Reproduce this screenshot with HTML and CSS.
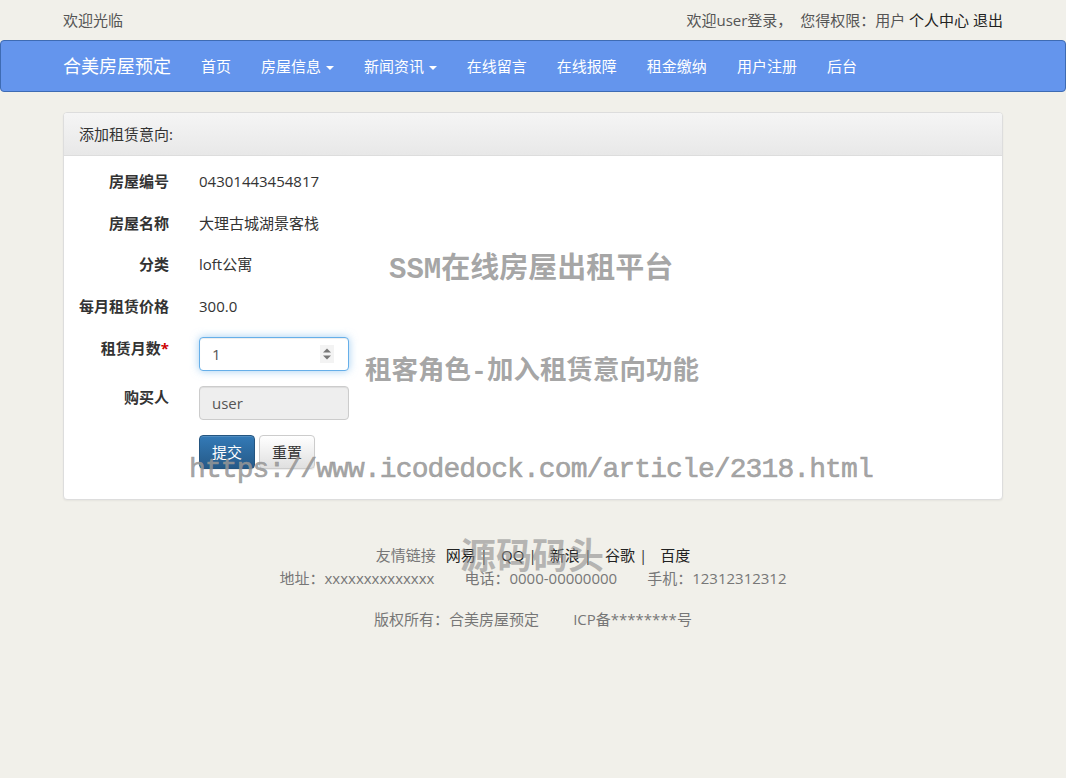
FILE: index.html
```html
<!DOCTYPE html>
<html lang="zh-CN">
<head>
<meta charset="utf-8">
<title>合美房屋预定</title>
<link rel="stylesheet" href="styles.css">
</head>
<body>
<div class="page">
  <div class="topbar">
    <div class="container topbar-inner">
      <span>欢迎光临</span>
      <span>欢迎user登录， &nbsp;您得权限：用户 <a class="toplink">个人中心</a> <a class="toplink">退出</a></span>
    </div>
  </div>

  <nav class="navbar">
    <div class="container navbar-inner">
      <a class="brand">合美房屋预定</a>
      <ul class="nav">
        <li>首页</li>
        <li>房屋信息 <span class="caret"></span></li>
        <li>新闻资讯 <span class="caret"></span></li>
        <li>在线留言</li>
        <li>在线报障</li>
        <li>租金缴纳</li>
        <li>用户注册</li>
        <li>后台</li>
      </ul>
    </div>
  </nav>

  <div class="container">
    <div class="panel">
      <div class="panel-heading">添加租赁意向:</div>
      <div class="panel-body">
        <div class="form-row static">
          <label class="form-label">房屋编号</label>
          <div class="form-value">04301443454817</div>
        </div>
        <div class="form-row static">
          <label class="form-label">房屋名称</label>
          <div class="form-value">大理古城湖景客栈</div>
        </div>
        <div class="form-row static">
          <label class="form-label">分类</label>
          <div class="form-value">loft公寓</div>
        </div>
        <div class="form-row static">
          <label class="form-label">每月租赁价格</label>
          <div class="form-value">300.0</div>
        </div>
        <div class="form-row">
          <label class="form-label field-label">租赁月数<span class="req">*</span></label>
          <div class="form-value">
            <div class="spin-wrap">
              <input class="form-control focused" type="text" value="1">
              <svg class="spinner" width="14" height="18" viewBox="0 0 14 18"><rect x="0" y="0" width="14" height="18" fill="#f3f3f3"/><path d="M3 7.5 L7 3.5 L11 7.5 Z" fill="#777"/><path d="M3 10.5 L7 14.5 L11 10.5 Z" fill="#777"/></svg>
            </div>
          </div>
        </div>
        <div class="form-row">
          <label class="form-label field-label">购买人</label>
          <div class="form-value">
            <input class="form-control disabled" type="text" value="user" disabled>
          </div>
        </div>
        <div class="form-row buttons">
          <div class="form-label"></div>
          <div class="form-value btn-group">
            <button class="btn btn-primary" type="button">提交</button>
            <button class="btn btn-default" type="button">重置</button>
          </div>
        </div>
      </div>
    </div>
  </div>

  <footer class="footer">
    <p class="links-line"><span class="muted">友情链接</span><a class="first">网易</a><span class="sep">|</span><a>QQ</a><span class="sep">|</span><a>新浪</a><span class="sep">|</span><a>谷歌</a><span class="sep">|</span><a>百度</a></p>
    <p class="contact-line"><span>地址：xxxxxxxxxxxxxx</span><span>电话：0000-00000000</span><span>手机：12312312312</span></p>
    <p class="copy-line"><span>版权所有：合美房屋预定</span><span>ICP备********号</span></p>
  </footer>

  <div class="wm wm-title">SSM在线房屋出租平台</div>
  <div class="wm wm-sub">租客角色-加入租赁意向功能</div>
  <div class="wm wm-url">https://www.icodedock.com/article/2318.html</div>
  <div class="wm wm-foot">源码码头</div>
</div>
</body>
</html>
```

FILE: styles.css
```css
* { box-sizing: border-box; }

html, body {
  margin: 0;
  padding: 0;
}

body {
  background: #f1f0ea;
  font-family: "Open Sans", "Noto Sans CJK SC", sans-serif;
  font-size: 15px;
  line-height: 20px;
  color: #333;
  width: 1066px;
  height: 778px;
  overflow: hidden;
}

.page {
  position: relative;
  min-height: 778px;
}

.container {
  width: 940px;
  margin: 0 auto;
}

a { color: #333; text-decoration: none; }

/* top bar */
.topbar {
  height: 40px;
  color: #555;
}
.topbar-inner {
  display: flex;
  justify-content: space-between;
  align-items: center;
  height: 40px;
}
.toplink { color: #222; }

/* navbar */
.navbar {
  height: 52px;
  background: #6495ed;
  border: 1px solid #3e6bb3;
  border-radius: 4px;
}
.navbar-inner {
  display: flex;
  align-items: center;
  height: 50px;
}
.brand {
  color: #fff;
  font-size: 18px;
  line-height: 20px;
  padding-right: 15px;
}
.nav {
  display: flex;
  list-style: none;
  margin: 0;
  padding: 0;
}
.nav li {
  color: #fff;
  padding: 15px 15px;
  line-height: 20px;
  white-space: nowrap;
}
.caret {
  display: inline-block;
  width: 0;
  height: 0;
  margin-left: 1px;
  vertical-align: middle;
  border-top: 4px solid #fff;
  border-left: 4px solid transparent;
  border-right: 4px solid transparent;
}

/* panel */
.panel {
  margin-top: 20px;
  background: #fff;
  border: 1px solid #ddd;
  border-radius: 4px;
  box-shadow: 0 1px 2px rgba(0,0,0,.05);
}
.panel-heading {
  height: 43px;
  padding: 11px 15px;
  background: linear-gradient(to bottom, #f5f5f5 0%, #e8e8e8 100%);
  border-bottom: 1px solid #ddd;
  border-radius: 3px 3px 0 0;
  color: #333;
}
.panel-body {
  padding: 15px 15px 15px;
}

.form-row {
  display: grid;
  grid-template-columns: 90px 150px;
  column-gap: 30px;
  margin-bottom: 15px;
}
.form-row.static { min-height: 26.5px; }
.form-label {
  text-align: right;
  font-weight: bold;
  color: #333;
  white-space: nowrap;
}
.field-label { padding-top: 1px; }
.req { color: #c00; }
.form-value {
  color: #333;
  white-space: nowrap;
}

.form-control {
  display: block;
  width: 150px;
  height: 34px;
  padding: 6px 12px;
  font-family: inherit;
  font-size: 15px;
  color: #555;
  background: #fff;
  border: 1px solid #ccc;
  border-radius: 4px;
  box-shadow: inset 0 1px 1px rgba(0,0,0,.075);
  outline: none;
}
.form-control.focused {
  border-color: #66afe9;
  box-shadow: inset 0 1px 1px rgba(0,0,0,.075), 0 0 8px rgba(102,175,233,.6);
}
.form-control.disabled {
  background: #eee;
  color: #555;
  -webkit-text-fill-color: #555;
  opacity: 1;
}
.spin-wrap {
  position: relative;
  width: 150px;
}
.spinner {
  position: absolute;
  right: 15px;
  top: 8px;
}

.btn-group {
  display: flex;
  gap: 4px;
}
.btn {
  height: 34px;
  padding: 6px 12px;
  font-family: inherit;
  font-size: 15px;
  line-height: 20px;
  border-radius: 4px;
  border: 1px solid;
  cursor: pointer;
}
.btn-primary {
  color: #fff;
  background: linear-gradient(to bottom, #337ab7 0%, #265a88 100%);
  border-color: #245580;
  box-shadow: inset 0 1px 0 rgba(255,255,255,.15), 0 1px 1px rgba(0,0,0,.075);
}
.btn-default {
  color: #333;
  background: linear-gradient(to bottom, #fff 0%, #e0e0e0 100%);
  border-color: #ccc;
  box-shadow: inset 0 1px 0 rgba(255,255,255,.15), 0 1px 1px rgba(0,0,0,.075);
}

/* footer */
.footer {
  margin-top: 44px;
  text-align: center;
  color: #777;
}
.footer p { margin: 0; line-height: 23px; }
.links-line a { color: #222; margin-left: 13px; }
.links-line a.first { margin-left: 10px; }
.links-line .sep { color: #333; margin-left: 4px; }
.contact-line span { margin: 0 15px; }
.copy-line { margin-top: 18px !important; }
.copy-line span { margin: 0 17px; }

/* watermarks */
.wm {
  position: absolute;
  font-weight: bold;
  color: rgba(150,150,150,.85);
  white-space: nowrap;
  font-family: "Liberation Mono", "Noto Sans CJK SC", monospace;
  pointer-events: none;
}
.wm-title {
  left: 389px;
  top: 251px;
  font-size: 29px;
  line-height: 40px;
}
.wm-sub {
  left: 365px;
  top: 352px;
  font-size: 26.5px;
  line-height: 40px;
}
.wm-url {
  left: 189px;
  top: 450px;
  font-size: 28px;
  line-height: 40px;
  letter-spacing: -0.9px;
  font-weight: normal;
  -webkit-text-stroke: 0.6px rgba(150,150,150,.85);
}
.wm-foot {
  left: 460px;
  top: 538px;
  font-size: 36px;
  line-height: 44px;
  color: rgba(140,140,140,.6);
}
```
